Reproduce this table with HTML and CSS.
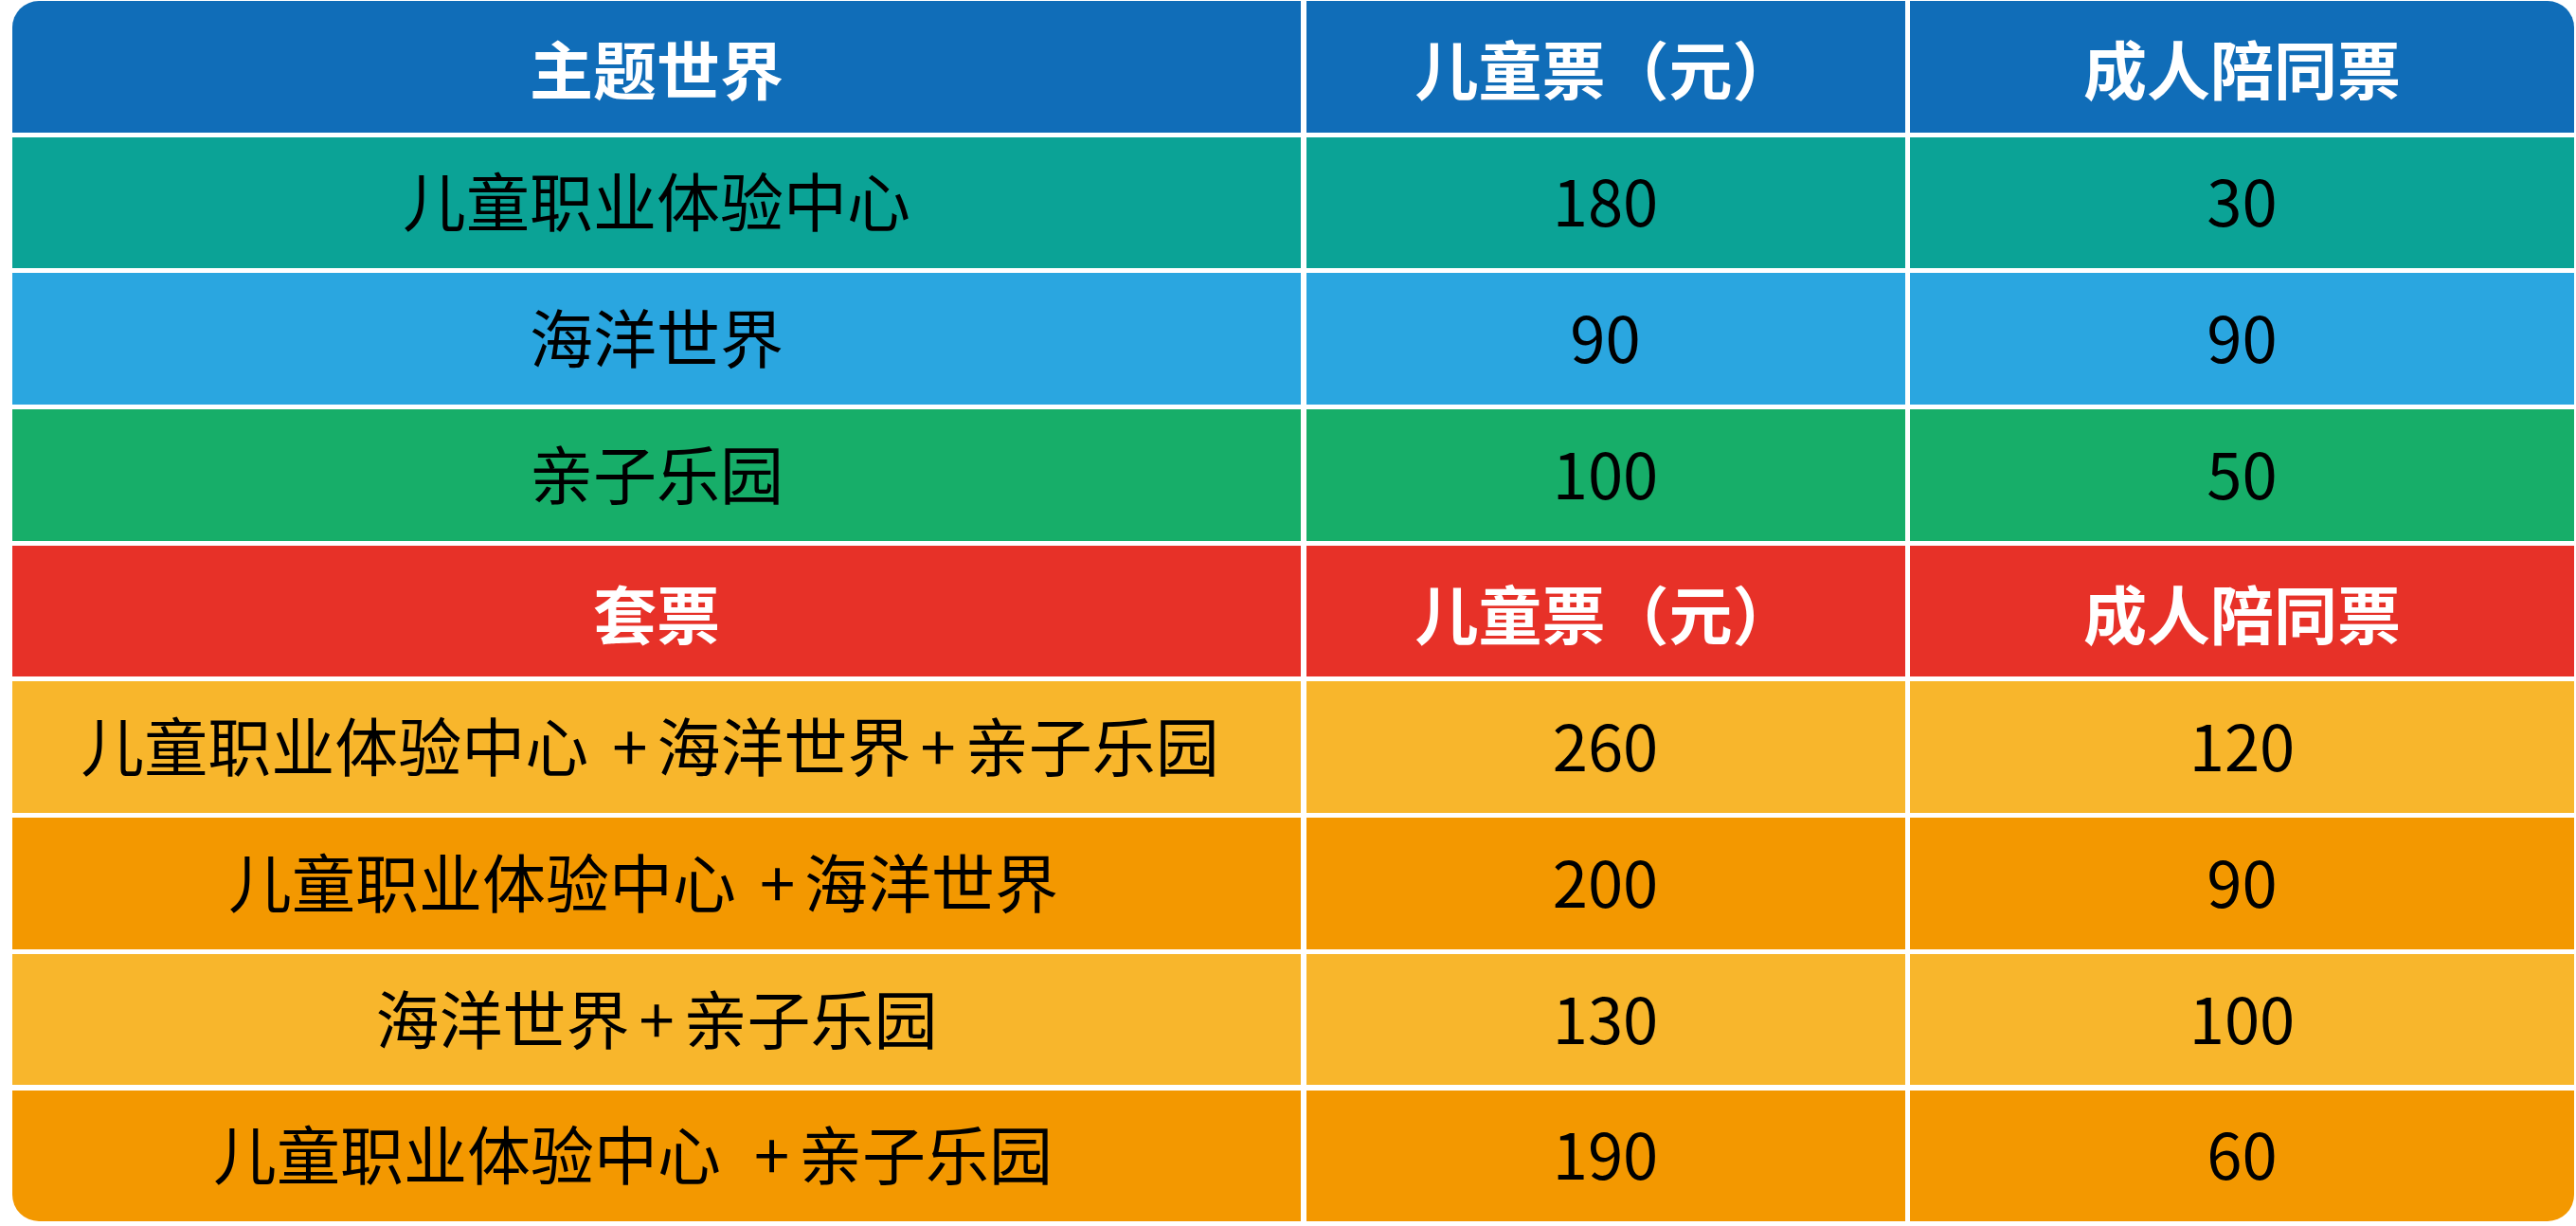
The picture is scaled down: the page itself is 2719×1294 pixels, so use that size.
FILE: index.html
```html
<!DOCTYPE html>
<html lang="zh-CN">
<head>
<meta charset="utf-8">
<title>票价</title>
<link rel="stylesheet" href="styles.css">
</head>
<body>
<div class="table">
  <div class="cell head blue">主题世界</div>
  <div class="cell head blue">儿童票（元）</div>
  <div class="cell head blue">成人陪同票</div>

  <div class="cell teal">儿童职业体验中心</div>
  <div class="cell teal">180</div>
  <div class="cell teal">30</div>

  <div class="cell sky">海洋世界</div>
  <div class="cell sky">90</div>
  <div class="cell sky">90</div>

  <div class="cell green">亲子乐园</div>
  <div class="cell green">100</div>
  <div class="cell green">50</div>

  <div class="cell head red">套票</div>
  <div class="cell head red">儿童票（元）</div>
  <div class="cell head red">成人陪同票</div>

  <div class="cell yellow shift-s">儿童职业体验中心 <span class="plus">+</span>海洋世界<span class="plus">+</span>亲子乐园</div>
  <div class="cell yellow">260</div>
  <div class="cell yellow">120</div>

  <div class="cell orange shift-m">儿童职业体验中心 <span class="plus">+</span>海洋世界</div>
  <div class="cell orange">200</div>
  <div class="cell orange">90</div>

  <div class="cell yellow">海洋世界<span class="plus">+</span>亲子乐园</div>
  <div class="cell yellow">130</div>
  <div class="cell yellow">100</div>

  <div class="cell orange shift-l">儿童职业体验中心 <span class="plus wide">+</span>亲子乐园</div>
  <div class="cell orange">190</div>
  <div class="cell orange">60</div>
</div>
</body>
</html>
```

FILE: styles.css
```css
html, body {
  margin: 0;
  padding: 0;
  background: #ffffff;
}

body {
  padding: 1px 0 0 13px;
  font-family: "Noto Sans CJK SC", "Noto Sans", sans-serif;
}

.table {
  display: grid;
  width: 2704px;
  grid-template-columns: 1360px 632px 701px;
  grid-auto-rows: 138.5px;
  column-gap: 5.5px;
  row-gap: 5.2px;
  border-radius: 28px;
  overflow: hidden;
  background: #ffffff;
}

.cell {
  display: flex;
  align-items: center;
  justify-content: center;
  box-sizing: border-box;
  padding-bottom: 8px;
  font-size: 67px;
  font-weight: 400;
  color: #000000;
  white-space: pre;
  line-height: 1;
}

.head {
  padding-bottom: 0;
  font-weight: 700;
  color: #ffffff;
}

.plus {
  margin: 0 10px;
}

.plus.wide {
  margin-left: 20px;
}

.shift-s { padding-right: 14px; }
.shift-m { padding-right: 28px; }
.shift-l { padding-right: 50px; }

.blue { background: #106db8; }
.teal { background: #0ba396; }
.sky { background: #2aa6e0; }
.green { background: #17ae69; }
.red { background: #e73128; }
.yellow { background: #f8b62c; }
.orange { background: #f39800; }
```
